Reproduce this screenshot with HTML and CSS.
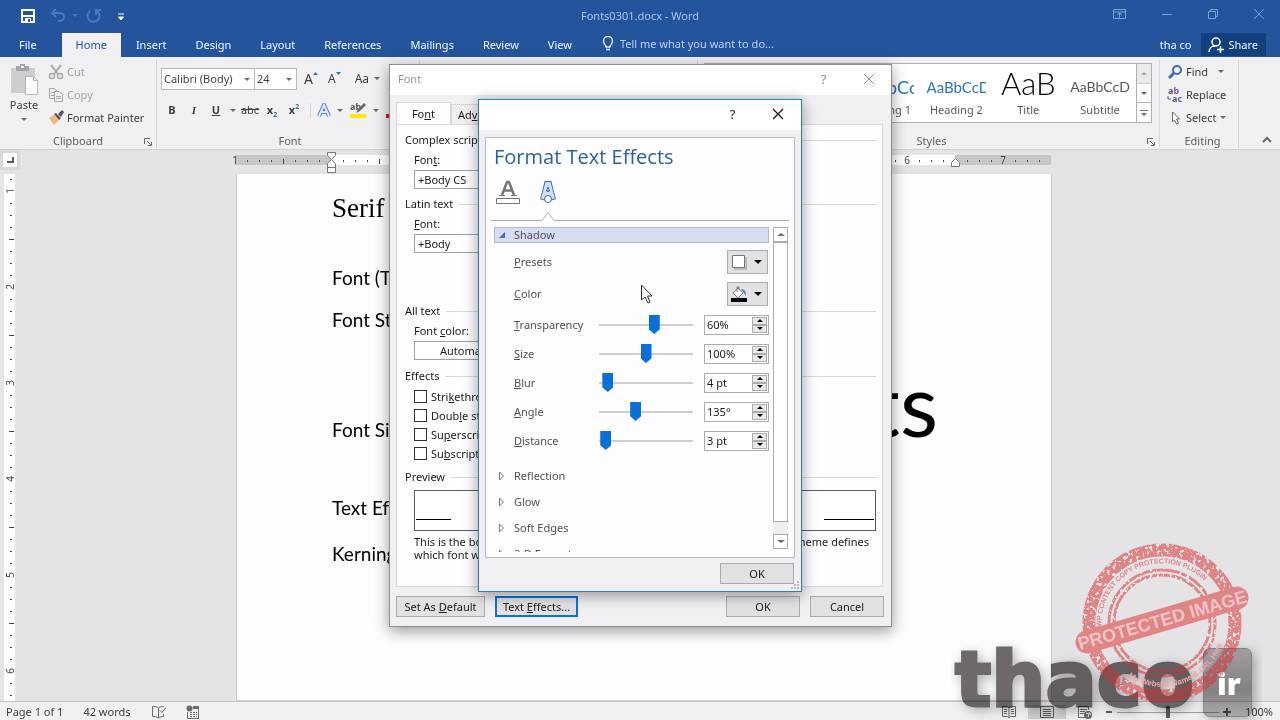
FILE: index.html
```html
<!DOCTYPE html>
<html lang="en">

<head>
	<meta charset="utf-8">
	<title>Fonts0301.docx - Word</title>
	<link rel="stylesheet" href="styles.css">
</head>

<body>
<div class="app">
	<header class="titlebar">
		<div class="quick">
			<button aria-label="Save"><svg width="16" height="16"><path d="M2 2h12v12H2z" fill="none" stroke="#fff" stroke-width="2"/><path d="M3 7h10v2H3zM5 10h6v4H5z" fill="#fff"/><path d="M8 11h2v3H8z" fill="#24559c"/></svg></button>
			<button class="faded" aria-label="Undo"><svg width="28" height="16"><path d="M6 1L2 5l4 4M2 5h8a4 4 0 0 1 0 8H8" fill="none" stroke="#4a78ba" stroke-width="2"/><path d="M22 6h6l-3 3z" fill="#4a78ba"/></svg></button>
			<button class="faded" aria-label="Redo"><svg width="16" height="16"><path d="M4 3a6 6 0 1 0 7 0M10 7V2h5" fill="none" stroke="#4a78ba" stroke-width="2"/></svg></button>
			<button aria-label="Customize"><svg width="16" height="16"><path d="M5 6h6M5.500 9h5l-2.500 3z" fill="#fff" stroke="#fff"/></svg></button>
		</div>
		<div class="doc-name">Fonts0301.docx - Word</div>
		<div class="win-buttons">
			<button aria-label="Ribbon options"><svg width="14" height="12"><path d="M.5 1.500h12v9H.5zM.5 4h12M6.500 10V5M4 7l2.500-2L9 7" fill="none" stroke="#7ba0d4"/></svg></button>
			<button aria-label="Minimize"><svg width="12" height="12"><path d="M1 6.500h10" stroke="#7ba0d4"/></svg></button>
			<button aria-label="Restore"><svg width="12" height="12"><path d="M1.500 3.500h7v7h-7zM3.500 3V1.500h7v7H9" fill="none" stroke="#7ba0d4"/></svg></button>
			<button aria-label="Close"><svg width="12" height="12"><path d="M1 1l10 10M11 1L1 11" stroke="#7ba0d4"/></svg></button>
		</div>
	</header>

	<nav class="tabs">
		<a class="tab file" href="#">File</a>
		<a class="tab active" href="#">Home</a>
		<a class="tab" href="#">Insert</a>
		<a class="tab" href="#">Design</a>
		<a class="tab" href="#">Layout</a>
		<a class="tab" href="#">References</a>
		<a class="tab" href="#">Mailings</a>
		<a class="tab" href="#">Review</a>
		<a class="tab" href="#">View</a>
		<a class="tell" href="#"><svg width="12" height="16"><path d="M4 11C4 9 1.500 8 1.500 5a4.500 4.500 0 0 1 9 0C10.500 8 8 9 8 11zM4 13.500h4" fill="none" stroke="#e6eefa" stroke-width="1.300"/></svg>Tell me what you want to do...</a>
		<span class="user">tha co</span>
		<button class="share"><svg width="16" height="16"><circle cx="8" cy="5" r="4" fill="none" stroke="#fff" stroke-width="1.500"/><path d="M1 15c0-4 3-6 6-6M9 12.500h7M12.500 9v7" fill="none" stroke="#fff" stroke-width="1.500"/></svg>Share</button>
	</nav>

	<div class="ribbon">
		<section class="group clipboard">
			<div class="group-body">
				<button class="paste">
					<svg width="30" height="32"><path d="M2 4h24v25H2z" fill="#cfcdd1"/><path d="M7 2h4V0h5v2h4v5H7z" fill="#a5a3a7"/><path d="M12 2h3v2h-3z" fill="#f0eff1"/><path d="M16.500 12.500h8l4 4v14h-12z" fill="#fdfcff" stroke="#b5b3b8"/><path d="M24.500 12.500v4h4" fill="none" stroke="#b5b3b8"/></svg>
					Paste
					<i class="arrow"></i>
				</button>
				<div class="stack">
					<button class="off"><svg width="16" height="16"><path d="M3 1l7 9M13 1L6 10" stroke="#a9a7ac" stroke-width="2"/><circle cx="4" cy="12" r="2.500" fill="none" stroke="#a9a7ac" stroke-width="1.500"/><circle cx="12" cy="12" r="2.500" fill="none" stroke="#a9a7ac" stroke-width="1.500"/></svg>Cut</button>
					<button class="off"><svg width="16" height="16"><path d="M1.500 1.500h5l3 3v7h-8z" fill="none" stroke="#a9a7ac"/><path d="M6.500 4.500h5l3 3v7h-8z" fill="#f0eff1" stroke="#a9a7ac"/><path d="M3 5.500h3M3 8.500h3M8 9.500h5M8 11.500h5" stroke="#a9a7ac"/></svg>Copy</button>
					<button><svg width="16" height="16"><path d="M1 8l5-3 5 5-5 5z" fill="#eeb979"/><path d="M6 4l2-1 5 5-2 2zM10 4l4-4 2 2-3 5z" fill="#57555a"/></svg>Format Painter</button>
				</div>
			</div>
			<div class="group-label">Clipboard<svg class="launcher" width="8" height="8"><path d="M.5 6V.5H6M3 3l4 4M7.500 4v3.500H4" fill="none" stroke="#6b696e"/></svg></div>
		</section>

		<section class="group font">
			<div class="font-row">
				<button class="combo name">Calibri (Body)<i class="arrow"></i></button><button class="combo size">24<i class="arrow"></i></button>
				<button class="grow"><span class="big">A</span><svg width="5" height="10"><path d="M0 4h5L2.500 1z" fill="#3a6db4"/></svg></button>
				<button class="grow"><span>A</span><svg width="5" height="10"><path d="M0 1h5L2.500 4z" fill="#3a6db4"/></svg></button>
				<button class="case">Aa<i class="arrow"></i></button>
			</div>
			<div class="font-row second">
				<button><b>B</b></button>
				<button><b class="ital">I</b></button>
				<button><b class="under">U</b></button>
				<button class="slim" aria-label="Underline style"><i class="arrow"></i></button>
				<button><s>abc</s></button>
				<button><b>x<sub>2</sub></b></button>
				<button><b>x<sup>2</sup></b></button>
				<button class="ink first"><svg width="14" height="15"><path d="M2 13L7 2l5 11M4 9h6" fill="none" stroke="#4f82c4" stroke-width="4"/><path d="M2 13L7 2l5 11M4 9h6" fill="none" stroke="#dfe9f7" stroke-width="2"/></svg><i class="arrow"></i></button>
				<button class="ink"><svg width="17" height="16"><text x="0" y="8" class="tiny">ab</text><path d="M6 11l2-4 6-6 2 2-6 6z" fill="#6b696e"/><path d="M0 12h16v4H0z" fill="#ffe800"/></svg><i class="arrow"></i></button>
				<button class="ink"><svg width="17" height="16"><path d="M4 10L8 1l4 9" fill="none" stroke="#555" stroke-width="2"/><path d="M0 12h16v4H0z" fill="#e81313"/></svg></button>
			</div>
			<div class="group-label">Font</div>
		</section>

		<section class="group paragraph">
			<div class="group-label">Paragraph</div>
		</section>

		<section class="group styles">
			<div class="gallery">
				<button class="style"><span>AaBbCcD</span>Normal</button>
				<button class="style"><span>AaBbCcD</span>No Spacing</button>
				<button class="style h1"><span>AaBbCc</span>Heading 1</button>
				<button class="style h2"><span>AaBbCcD</span>Heading 2</button>
				<button class="style title"><span>AaB</span>Title</button>
				<button class="style subtitle"><span>AaBbCcD</span>Subtitle</button>
				<div class="gallery-nav">
					<button class="dim" aria-label="Up"><i class="arrow up"></i></button>
					<button aria-label="Down"><i class="arrow"></i></button>
					<button aria-label="More"><svg width="8" height="8"><path d="M0 1.500h8" stroke="#6b696e"/><path d="M1 4h6L4 7z" fill="#6b696e"/></svg></button>
				</div>
			</div>
			<div class="group-label">Styles<svg class="launcher" width="8" height="8"><path d="M.5 6V.5H6M3 3l4 4M7.500 4v3.500H4" fill="none" stroke="#6b696e"/></svg></div>
		</section>

		<section class="group editing">
			<div class="group-body">
				<div class="stack">
					<button><svg width="16" height="14"><circle cx="10" cy="5" r="4" fill="none" stroke="#3a6db4" stroke-width="2"/><path d="M7 8l-5 5" stroke="#3a6db4" stroke-width="3"/></svg>Find<i class="arrow far"></i></button>
					<button><svg width="16" height="16"><text x="1" y="7" class="tiny">a<tspan fill="#8a4fb0">b</tspan></text><text x="5" y="15" class="tiny">a<tspan fill="#3a6db4">c</tspan></text><path d="M1 9v3h3" fill="none" stroke="#3a6db4"/></svg>Replace</button>
					<button><svg width="16" height="14"><path d="M5.500 1v10l2-2 2 4 2-1-2-4h3z" fill="#fff" stroke="#6b696e"/></svg>Select<i class="arrow"></i></button>
				</div>
			</div>
			<div class="group-label">Editing</div>
		</section>
		<button class="collapse" aria-label="Collapse ribbon"><svg width="10" height="8"><path d="M1 6l4-4 4 4" fill="none" stroke="#6b696e" stroke-width="2"/></svg></button>
	</div>

	<div class="ruler-row">
		<button class="corner" aria-label="Tab stop"><svg width="8" height="8"><path d="M7 1v5H1" fill="none" stroke="#5b595e" stroke-width="2"/></svg></button>
		<div class="ruler-wrap">
			<svg class="ruler" width="816" height="24">
				<defs>
					<pattern id="ticks" x="0" y="0" width="96" height="24" patternUnits="userSpaceOnUse">
						<path d="M12.500 10v2M24.500 10v2M36.500 10v2M60.500 10v2M72.500 10v2M84.500 10v2M48.500 9v5" stroke="#47454a"/>
					</pattern>
				</defs>
				<rect y="5" width="816" height="10" fill="#c6c5c7"/>
				<rect x="96" y="5" width="624" height="10" fill="#fff"/>
				<rect width="816" height="24" fill="url(#ticks)"/>
				<g class="ruler-num">
					<text x="0" y="14">1</text><text x="192" y="14">1</text><text x="672" y="14">6</text><text x="768" y="14">7</text>
				</g>
				<path d="M92.500 2.500h8v3l-4 4 4 4v9h-8v-9l4-4-4-4zM92.500 17.500h8M716.500 16.500v-4l4-4 4 4v4z" fill="#fff" stroke="#77757a"/>
			</svg>
		</div>
	</div>

	<main class="workspace">
		<svg class="v-ruler" width="16" height="527">
			<defs>
				<pattern id="vticks" x="0" y="17" width="16" height="96" patternUnits="userSpaceOnUse">
					<path d="M10 12.500h2M10 24.500h2M10 36.500h2M10 60.500h2M10 72.500h2M10 84.500h2M9 48.500h5" stroke="#47454a"/>
				</pattern>
			</defs>
			<rect x="4" width="11" height="527" fill="#fff"/>
			<rect width="16" height="527" fill="url(#vticks)"/>
			<g class="ruler-num">
				<text transform="translate(14 17) rotate(-90)">1</text><text transform="translate(14 113) rotate(-90)">2</text><text transform="translate(14 209) rotate(-90)">3</text><text transform="translate(14 305) rotate(-90)">4</text><text transform="translate(14 401) rotate(-90)">5</text><text transform="translate(14 497) rotate(-90)">6</text>
			</g>
		</svg>
		<article class="page">
			<p class="serif">Serif</p>
			<p class="face">Font (Typeface)</p>
			<p class="tight">Font Style</p>
			<p class="size-line">Font Size <span class="huge">Fonts</span></p>
			<p>Text Effects</p>
			<p>Kerning</p>
		</article>
	</main>

	<footer class="status">
		<span>Page 1 of 1</span>
		<span>42 words</span>
		<svg width="15" height="14"><path d="M7.500 3v10M7.500 3C6 1.500 3 1.500 1.500 1.500v10c2 0 4 0 6 1.500 1-1 3-1.500 5-1.500V9M7.500 3c1-1 3-1.500 5-1.500M9 5.500l2 2 4-5" fill="none" stroke="#6b696e"/></svg>
		<svg width="14" height="14"><circle cx="3.500" cy="3.500" r="3" fill="#6b696e"/><path d="M7 1h6v3H7z" fill="#6b696e"/><path d="M1.500 7v6.500h11V4M4 7.500h7M4 9.500h7M4 11.500h7" fill="none" stroke="#6b696e"/><path d="M6.500 6v7M9.500 6v7" stroke="#f0eff1"/></svg>
		<div class="views">
			<button aria-label="Read mode"><svg width="14" height="14"><path d="M7 2v11M.5 1.500h5L7 3l1.500-1.500h5v10h-5L7 13l-1.500-1.500h-5zM2 4.500h3M2 6.500h3M2 8.500h3M9 4.500h3M9 6.500h3M9 8.500h3" fill="none" stroke="#6b696e"/></svg></button>
			<button class="on" aria-label="Print layout"><svg width="14" height="14"><path d="M.5 1.500h13v11H.5zM3 4.500h8M3 6.500h8M3 8.500h8M3 10.500h8" fill="none" stroke="#5b595e"/></svg></button>
			<button aria-label="Web layout"><svg width="14" height="14"><path d="M7 12.500H.5v-11h10V5M2 4.500h7M2 6.500h5M2 8.500h4" fill="none" stroke="#6b696e"/><circle cx="10" cy="10" r="4" fill="#6b696e"/><path d="M8 8l3 1-1 3M11 7l2 3" fill="none" stroke="#f0eff1"/></svg></button>
		</div>
		<div class="zoom">
			<button aria-label="Zoom out"><svg width="8" height="8"><path d="M1 4h6" stroke="#5b595e" stroke-width="2"/></svg></button>
			<input type="range" min="0" max="100" value="50" aria-label="Zoom">
			<button aria-label="Zoom in"><svg width="8" height="8"><path d="M0 4h8M4 0v8" stroke="#5b595e" stroke-width="2"/></svg></button>
			<span>100%</span>
		</div>
	</footer>
</div>

<div class="dialog font-dialog" role="dialog" aria-label="Font">
	<div class="dialog-title"><span>Font</span><button>?</button><button aria-label="Close"><svg width="12" height="12"><path d="M1 1l10 10M11 1L1 11" stroke="#8b898e"/></svg></button></div>
	<div class="dialog-tabs">
		<button class="on">Fo<u>n</u>t</button>
		<button>Ad<u>v</u>anced</button>
	</div>
	<div class="font-panel">
		<h3>Complex scripts</h3>
		<label for="cs-font">Fon<u>t</u>:</label>
		<input id="cs-font" type="text" value="+Body CS">
		<h3 class="latin">Latin text</h3>
		<label for="latin-font"><u>F</u>ont:</label>
		<input id="latin-font" type="text" value="+Body">
		<h3 class="all">All text</h3>
		<label for="font-color">Font <u>c</u>olor:</label>
		<select id="font-color"><option>Automatic</option></select>
		<h3 class="effects">Effects</h3>
		<div class="checks">
			<label><input type="checkbox"><span>Stri<u>k</u>ethrough</span></label>
			<label><input type="checkbox"><span>Doub<u>l</u>e strikethrough</span></label>
			<label><input type="checkbox"><span>Su<u>p</u>erscript</span></label>
			<label><input type="checkbox"><span>Su<u>b</u>script</span></label>
		</div>
		<h3 class="preview-head">Preview</h3>
		<div class="preview"><i></i><i></i></div>
		<div class="note"><span>This is the body theme font for</span><span>The current document theme defines</span></div>
		<div class="note"><span>which font will be used.</span></div>
	</div>
	<div class="dialog-buttons">
		<button class="wide">Set As <u>D</u>efault</button>
		<button class="focus">Text <u>E</u>ffects...</button>
		<button class="push">OK</button>
		<button>Cancel</button>
	</div>
</div>

<div class="dialog effects-dialog" role="dialog" aria-label="Format Text Effects">
	<div class="dialog-title"><button>?</button><button aria-label="Close"><svg width="12" height="12"><path d="M1 1l10 10M11 1L1 11" stroke="#111" stroke-width="1.200"/></svg></button></div>
	<div class="fx-panel">
		<h2>Format Text Effects</h2>
		<div class="fx-icons">
			<button aria-label="Text fill and outline"><svg width="24" height="26"><path d="M6 16L11 3h2l5 13M8 11.500h8" fill="none" stroke="#77757a" stroke-width="2.500"/><path d="M3 16.500h6M15 16.500h6" stroke="#77757a"/><path d="M.5 19.500h23v5H.5z" fill="#fff" stroke="#77757a"/></svg></button>
			<button aria-label="Text effects"><svg width="18" height="26"><path d="M4 21L8 5h2l4 16M5 15h8" fill="none" stroke="#376cab" stroke-width="6"/><path d="M4 20L8 5h2l4 15M5 15h8" fill="none" stroke="#cfdef2" stroke-width="4"/><circle cx="9" cy="20" r="3.500" fill="#fff" stroke="#376cab"/><path d="M9 8l-1.500 4h3z" fill="#fff" stroke="#376cab"/></svg></button>
		</div>
		<svg class="notch" width="298" height="9"><path d="M0 8.500h51l6-8 6 8h235" fill="#fff" stroke="#aeacb1"/></svg>
		<div class="fx-scroll">
			<div class="fx-list">
				<button class="fold open"><svg width="8" height="8"><path d="M7 1v6H1z" fill="#3f6cb0"/></svg>Shadow</button>
				<div class="row tall"><span><u>P</u>resets</span><button class="drop" aria-label="Presets"><svg width="16" height="16"><path d="M3 3h13v13H3z" fill="#bdbbc0"/><path d="M1.500 1.500h12v12h-12z" fill="#fff" stroke="#77757a"/></svg><i class="arrow dark"></i></button></div>
				<div class="row tall"><span><u>C</u>olor</span><button class="drop" aria-label="Color"><svg width="16" height="16"><path d="M2 7l5-5 5 5-5 5z" fill="#fff" stroke="#77757a"/><path d="M6 6V1h2v3" fill="none" stroke="#77757a"/><path d="M10 3c4 0 5 3 5 7l-2-3z" fill="#5078b5"/><path d="M0 12h16v4H0z" fill="#000"/></svg><i class="arrow dark"></i></button></div>
				<div class="row"><label for="tr"><u>T</u>ransparency</label><input id="tr" type="range" value="60"><div class="spin"><input type="text" value="60%" aria-label="Transparency value"><button aria-label="More"><i class="arrow dark up"></i></button><button aria-label="Less"><i class="arrow dark"></i></button></div></div>
				<div class="row"><label for="sz"><u>S</u>ize</label><input id="sz" type="range" max="200" value="100"><div class="spin"><input type="text" value="100%" aria-label="Size value"><button aria-label="More"><i class="arrow dark up"></i></button><button aria-label="Less"><i class="arrow dark"></i></button></div></div>
				<div class="row"><label for="bl"><u>B</u>lur</label><input id="bl" type="range" value="4"><div class="spin"><input type="text" value="4 pt" aria-label="Blur value"><button aria-label="More"><i class="arrow dark up"></i></button><button aria-label="Less"><i class="arrow dark"></i></button></div></div>
				<div class="row"><label for="an"><u>A</u>ngle</label><input id="an" type="range" max="360" value="135"><div class="spin"><input type="text" value="135°" aria-label="Angle value"><button aria-label="More"><i class="arrow dark up"></i></button><button aria-label="Less"><i class="arrow dark"></i></button></div></div>
				<div class="row"><label for="di"><u>D</u>istance</label><input id="di" type="range" max="200" value="3"><div class="spin"><input type="text" value="3 pt" aria-label="Distance value"><button aria-label="More"><i class="arrow dark up"></i></button><button aria-label="Less"><i class="arrow dark"></i></button></div></div>
				<div class="folds">
					<button class="fold"><svg width="8" height="10"><path d="M1.500 1v8l4-4z" fill="#fff" stroke="#77757a"/></svg>Reflection</button>
					<button class="fold"><svg width="8" height="10"><path d="M1.500 1v8l4-4z" fill="#fff" stroke="#77757a"/></svg>Glow</button>
					<button class="fold"><svg width="8" height="10"><path d="M1.500 1v8l4-4z" fill="#fff" stroke="#77757a"/></svg>Soft Edges</button>
					<button class="fold"><svg width="8" height="10"><path d="M1.500 1v8l4-4z" fill="#fff" stroke="#77757a"/></svg>3-D Format</button>
				</div>
			</div>
			<div class="scrollbar">
				<button aria-label="Scroll up"><i class="arrow up"></i></button>
				<div class="thumb"></div>
				<button aria-label="Scroll down"><i class="arrow"></i></button>
			</div>
		</div>
	</div>
	<div class="dialog-buttons"><button class="push">OK</button></div>
	<svg class="grip" width="9" height="9"><path d="M6 0h2v2H6zM3 3h2v2H3zM6 3h2v2H6zM0 6h2v2H0zM3 6h2v2H3zM6 6h2v2H6z" fill="#bdbbc0"/></svg>
</div>

<svg class="cursor" width="14" height="20"><path d="M1.500 1v15l3.500-3 3 6 2-1-2.500-6H12z" fill="#fff" stroke="#2c2a30"/></svg>

<svg class="watermark blend" width="330" height="190" viewBox="950 530 330 190">
	<defs>
		<filter id="soft" x="-20%" y="-20%" width="140%" height="150%"><feDropShadow dx="3" dy="3" stdDeviation="6" flood-color="#000" flood-opacity=".3"/></filter>
		<linearGradient id="key" x1="0" y1="0" x2="0" y2="1"><stop offset="0" stop-color="#b4b2b5"/><stop offset=".6" stop-color="#939194"/><stop offset="1" stop-color="#b4b2b5"/></linearGradient>
	</defs>
	<text class="brand" x="955" y="706" filter="url(#soft)">thaco</text>
	<rect x="1203.500" y="648.500" width="48" height="68" rx="6" fill="url(#key)" stroke="#939194" filter="url(#soft)"/>
</svg>
<svg class="watermark" width="330" height="190" viewBox="950 530 330 190">
	<defs>
		<filter id="grain" x="-5%" y="-5%" width="110%" height="110%">
			<feTurbulence type="fractalNoise" baseFrequency="0.3" numOctaves="2" seed="4"/>
			<feColorMatrix values="0 0 0 0 0  0 0 0 0 0  0 0 0 0 0  0 0 0 -14 9"/>
			<feComposite in="SourceGraphic" operator="in"/>
		</filter>
		<path id="arc-top" d="M1101.500 627A60.500 60.500 0 1 1 1222 631"/>
		<path id="arc-low" d="M1128 677A64 64 0 0 0 1226 623"/>
	</defs>
	<text class="brand-tld" x="1217" y="695">ir</text>
	<g class="stamp">
		<circle cx="1162" cy="623" r="73" stroke-width="13" filter="url(#grain)"/>
		<circle cx="1162" cy="623" r="53" stroke-width="3" filter="url(#grain)"/>
		<circle cx="1162" cy="623" r="48" stroke-width="3" filter="url(#grain)"/>
		<path d="M1087 642L1237 598" stroke-width="23" stroke-linecap="round"/>
		<text class="stamp-top"><textPath href="#arc-top">WP CONTENT COPY PROTECTION PLUGIN</textPath></text>
	</g>
	<text class="stamp-low"><textPath href="#arc-low">My Website Name &amp; URL Here</textPath></text>
	<text class="stamp-mid" text-anchor="middle" transform="translate(1164 626) rotate(-16)">PROTECTED IMAGE</text>
</svg>
</body>

</html>
```
FILE: styles.css
```css
* {
	box-sizing: border-box;
}

body {
	margin: 0;
	overflow: hidden;
	font-family: "Noto Sans", "Open Sans", sans-serif;
	font-size: 11px;
	line-height: 16px;
	color: #3f3d42;
	background: #e4e3e5;
}

button, input, select {
	font: inherit;
	color: inherit;
	margin: 0;
	padding: 0;
	border: 0;
	background: none;
	border-radius: 0;
}

svg {
	display: block;
	flex: none;
}

h2, h3, p {
	margin: 0;
	font-weight: normal;
}

a {
	color: inherit;
	text-decoration: none;
}

.app {
	display: flex;
	flex-direction: column;
	height: 100vh;
}

.arrow {
	display: inline-block;
	border: 3px solid transparent;
	border-top-color: #6b696e;
	border-bottom: 0;
}

.arrow.up {
	border-top: 0;
	border-bottom: 3px solid #6b696e;
}

.arrow.dark {
	border-top-color: #000;
}

.arrow.dark.up {
	border-bottom-color: #000;
}

/* title bar */

.titlebar {
	display: grid;
	grid-template-columns: 1fr auto 1fr;
	align-items: center;
	height: 31px;
	padding: 0 15px;
	background: #24559c;
	color: #a9c3e8;
}

.quick {
	display: flex;
	align-items: center;
	gap: 14px;
	height: 26px;
	padding-left: 5px;
}

.quick .faded {
	margin-right: -6px;
}

.quick button:last-child {
	margin-left: 3px;
}

.win-buttons {
	display: flex;
	justify-content: flex-end;
	gap: 34px;
	padding-bottom: 4px;
}

/* ribbon tabs */

.tabs {
	display: flex;
	height: 26px;
	line-height: 28px;
	color: #f3f6fc;
	background: #24559c;
	padding-right: 4px;
}

.tab {
	padding: 0 15px 0 14px;
}

.tab.file {
	padding: 0 25px 0 19px;
}

.tab.active {
	background: #f0eff1;
	color: #24559c;
	padding: 0 14px;
	margin: 2px 1px 0 0;
	line-height: 24px;
}

.tell {
	display: flex;
	align-items: center;
	gap: 6px;
	margin-left: 15px;
	color: #bcd0ee;
}

.user {
	margin-left: auto;
	margin-right: 10px;
}

.share {
	display: flex;
	align-items: center;
	gap: 4px;
	padding: 0 8px 0 7px;
	margin: 2px 10px 1px 0;
	background: #12407f;
}

/* ribbon */

.ribbon {
	display: flex;
	height: 93px;
	padding: 3px 0 1px;
	background: #f0eff1;
	border-bottom: 1px solid #d2d0d3;
}

.group {
	display: flex;
	flex-direction: column;
	border-right: 1px solid #d5d4d6;
}

.group-body {
	display: flex;
	flex: 1;
}

.group-label {
	display: flex;
	justify-content: center;
	margin-top: auto;
	line-height: 14px;
	color: #626065;
}

.launcher {
	margin: 4px 4px 0 auto;
}

.group-label:has(.launcher)::before {
	content: "";
	width: 12px;
	margin-right: auto;
}

.clipboard {
	width: 157px;
}

.paste {
	display: flex;
	flex-direction: column;
	align-items: center;
	gap: 1px;
	padding: 4px 0 0;
	width: 48px;
}

.paste .arrow {
	margin-top: 4px;
}

.stack button {
	display: flex;
	align-items: center;
	gap: 3px;
	height: 23px;
}

.stack .off {
	color: #a3a1a6;
}

.font {
	width: 263px;
	padding-left: 4px;
}

.font-row {
	display: flex;
	align-items: center;
	height: 22px;
	margin-top: 8px;
}

.font-row.second {
	height: 20px;
	margin-top: 10px;
}

.second button {
	display: flex;
	align-items: center;
	justify-content: center;
	gap: 6px;
	width: 22px;
}

.second .slim {
	width: 12px;
}

.second .ink {
	width: auto;
	margin-left: 7px;
}

.second .first {
	margin-left: 5px;
	padding-left: 6px;
	border-left: 1px solid #d5d4d6;
}

.ital {
	font-family: "Liberation Serif", serif;
	font-style: italic;
}

.under {
	text-decoration: underline;
}

sub, sup {
	font-size: 7px;
	line-height: 0;
	color: #3a6db4;
}

.tiny {
	font-size: 9px;
	font-weight: bold;
	fill: #57555a;
}

.combo {
	display: flex;
	align-items: center;
	justify-content: space-between;
	height: 22px;
	padding: 0 4px 0 2px;
	border: 1px solid #b9b7bb;
	background: #fff;
}

.combo.name {
	width: 94px;
}

.combo.size {
	width: 43px;
	margin-left: -1px;
	margin-right: 7px;
}

.grow {
	display: flex;
	font-size: 12px;
	margin-right: 10px;
}

.grow .big {
	font-size: 14px;
}

.case {
	margin-left: 4px;
	font-size: 12px;
}

.case .arrow {
	margin: 0 0 3px 5px;
}

.paragraph {
	flex: 1;
	overflow: hidden;
}

.styles {
	width: 462px;
	padding-left: 6px;
}

.gallery {
	display: flex;
	height: 60px;
	margin: 3px 7px 0 0;
	border: 1px solid #b1afb3;
	background: #fff;
}

.style {
	flex: 1 1 0;
	min-width: 0;
	padding: 0 6px;
	overflow: hidden;
	white-space: nowrap;
	color: #57555a;
}

.style span {
	display: block;
	height: 32px;
	line-height: 38px;
	margin-bottom: 2px;
	overflow: hidden;
	font-family: Lato, sans-serif;
	font-size: 14px;
}

.style.h1 span {
	font-size: 18px;
	color: #2e74b5;
}

.style.h2 span {
	font-size: 15px;
	color: #2e74b5;
}

.style.title span {
	font-size: 31px;
	font-weight: 300;
	line-height: 30px;
	color: #000;
}

.gallery-nav {
	display: flex;
	flex-direction: column;
	width: 15px;
	border-left: 1px solid #b1afb3;
}

.gallery-nav button {
	flex: 1;
	display: flex;
	align-items: center;
	justify-content: center;
	border-bottom: 1px solid #b1afb3;
}

.gallery-nav button:last-child {
	border-bottom: 0;
}

.gallery-nav .dim {
	background: #e1e0e2;
	opacity: .6;
}

.editing {
	width: 79px;
	padding-left: 7px;
}

.far {
	margin-left: 7px;
}

.collapse {
	margin: auto 8px 4px 23px;
}

/* rulers and page */

.ruler-row {
	display: flex;
	height: 24px;
}

.corner {
	display: flex;
	align-items: center;
	justify-content: center;
	width: 20px;
	height: 20px;
	border: 3px solid #d8d7d9;
	background: #fff;
}

.ruler-wrap {
	flex: 1;
	display: flex;
	justify-content: center;
	padding-right: 14px;
}

.ruler {
	overflow: visible;
}

.ruler-num {
	font-size: 10px;
	fill: #47454a;
	text-anchor: middle;
}

.workspace {
	flex: 1;
	min-height: 0;
	display: flex;
	padding-right: 8px;
	overflow: hidden;
}

.page {
	width: 816px;
	margin: 0 auto;
	padding: 16px 113px 0 95px;
	background: #fdfcff;
	border: 1px solid #cccbcd;
	border-top: 0;
	font-family: Lato, sans-serif;
	font-size: 19px;
	line-height: 42px;
	color: #000;
}

.page p + p {
	margin-top: 4px;
}

.page .serif {
	font-family: "Liberation Serif", serif;
	font-size: 27px;
	line-height: 36px;
}

.page p.face {
	margin-top: 31px;
}

.page p.tight {
	margin-top: 0;
}

.page p.size-line {
	display: flex;
	justify-content: space-between;
	align-items: baseline;
	margin-top: 9px;
	line-height: 106px;
}

.huge {
	font-size: 88px;
}

/* status bar */

.status {
	display: flex;
	align-items: center;
	gap: 20px;
	height: 19px;
	padding: 2px 7px 0 6px;
	border-top: 1px solid #c4c3c5;
	background: #f0eff1;
}

.views {
	display: flex;
	margin: 0 -19px 0 auto;
}

.views button {
	display: flex;
	justify-content: center;
	width: 38px;
}

.views .on {
	background: #cfced0;
}

.zoom {
	display: flex;
	align-items: center;
	gap: 4px;
}

.zoom input {
	appearance: none;
	width: 102px;
	height: 12px;
	background: linear-gradient(#a19fa4, #a19fa4) center / 100% 1px no-repeat;
}

.zoom input::-webkit-slider-thumb {
	appearance: none;
	width: 4px;
	height: 12px;
	background: #5b595e;
}

.zoom span {
	margin-left: 10px;
}

/* dialogs */

.dialog {
	position: absolute;
	display: flex;
	flex-direction: column;
	background: #f0eff1;
	color: #1a191c;
}

.dialog-title {
	display: flex;
	align-items: center;
	height: 30px;
	padding-bottom: 2px;
	background: #fff;
}

.dialog-title button {
	width: 45px;
	font-size: 13px;
	display: flex;
	justify-content: center;
}

.dialog-title span {
	color: #98969b;
}

.dialog-title button:nth-last-child(2) {
	margin-left: auto;
}

.dialog-buttons {
	display: flex;
	gap: 11px;
}

.dialog-buttons button {
	width: 74px;
	height: 21px;
	border: 1px solid #adabb0;
	background: #e1e0e2;
}

.dialog-buttons .wide {
	width: 89px;
}

.dialog-buttons .focus {
	width: 83px;
	border: 2px solid #0a74d8;
}

.dialog-buttons .push {
	margin-left: auto;
}

.font-dialog {
	left: 389px;
	top: 64px;
	width: 503px;
	border: 1px solid #8f8d91;
	box-shadow: 0 4px 14px rgba(0, 0, 0, .4);
}

.font-dialog .dialog-title {
	padding-left: 8px;
	color: #8b898e;
}

.dialog-tabs {
	display: flex;
	align-items: flex-end;
	padding: 7px 7px 0 6px;
}

.dialog-tabs button {
	height: 20px;
	padding: 0 6px;
	border: 1px solid #d8d7d9;
	border-bottom: 0;
	background: #f0eff1;
}

.dialog-tabs .on {
	height: 23px;
	width: 55px;
	margin-bottom: -1px;
	background: #fdfcff;
}

.font-panel {
	margin: 0 8px 0 6px;
	padding: 7px 6px 25px 8px;
	border: 1px solid #d8d7d9;
	background: #fdfcff;
}

.font-panel h3 {
	display: flex;
	align-items: center;
	gap: 6px;
	font-size: 11px;
}

.font-panel h3::after {
	content: "";
	flex: 1;
	height: 1px;
	background: #d8d7d9;
}

.font-panel > label {
	display: block;
	margin: 4px 0 2px 9px;
	line-height: 16px;
}

.font-panel > input,
.font-panel > select {
	display: block;
	width: 140px;
	height: 19px;
	margin-left: 9px;
	padding: 0 3px;
	border: 1px solid #a19fa4;
	background: #fff;
}

.font-panel > select {
	appearance: none;
	padding-left: 25px;
}

.font-panel .latin {
	margin-top: 7px;
}

.font-panel .all {
	margin-top: 50px;
}

.font-panel .effects {
	margin-top: 8px;
}

.checks {
	margin: 3px 0 6px 9px;
}

.checks label {
	display: flex;
	align-items: center;
	gap: 4px;
	height: 19px;
}

.checks input {
	appearance: none;
	width: 13px;
	height: 13px;
	border: 1px solid #333135;
	background: #fff;
}

.preview {
	display: flex;
	justify-content: space-between;
	align-items: flex-end;
	height: 41px;
	margin: 5px 0 4px 9px;
	padding: 0 1px 10px;
	border: 1px solid #5b595e;
	background: #fff;
}

.preview i {
	width: 35px;
	height: 1px;
	background: #000;
}

.preview i + i {
	width: 50px;
}

.note {
	display: flex;
	justify-content: space-between;
	padding: 0 7px 0 9px;
	line-height: 13px;
}

.font-dialog .dialog-buttons {
	padding: 9px 7px 9px 6px;
	gap: 10px;
}

.effects-dialog {
	left: 478px;
	top: 99px;
	width: 324px;
	border: 1px solid #2a7fb8;
	box-shadow: 0 3px 14px rgba(0, 0, 0, .4);
}

.effects-dialog .dialog-title {
	padding-right: 1px;
}

.fx-panel {
	margin: 7px 6px 5px;
	border: 1px solid #bdbbc0;
	background: #fdfcff;
	padding: 5px;
}

.fx-panel h2 {
	padding-left: 3px;
	font-family: "Open Sans", sans-serif;
	font-size: 20px;
	line-height: 28px;
	color: #2f5f9c;
}

.fx-icons {
	display: flex;
	gap: 19px;
	padding: 8px 5px 7px;
}

.notch {
	width: 100%;
}

.fx-scroll {
	display: flex;
	height: 325px;
	margin-top: 6px;
	gap: 4px;
	overflow: hidden;
	color: #525055;
}

.fx-list {
	flex: 1;
	padding-left: 3px;
}

.fold {
	display: flex;
	align-items: center;
	gap: 8px;
	height: 26px;
	padding-left: 4px;
	width: 100%;
}

.fold.open {
	height: 16px;
	margin-bottom: 3px;
	padding-left: 3px;
	border: 1px solid #a9b8dc;
	background: #d4ddf2;
}

.row {
	display: flex;
	align-items: center;
	height: 29px;
	padding-left: 20px;
}

.row.tall {
	height: 32px;
}

.row > span, .row > label {
	width: 85px;
}

.row .drop {
	display: flex;
	align-items: center;
	justify-content: space-between;
	width: 41px;
	height: 24px;
	margin: 0 1px 0 auto;
	padding: 0 5px 0 3px;
	border: 1px solid #adabb0;
	background: #e1e0e2;
}

.drop .arrow {
	border-width: 4px 4px 0;
}

.row > input {
	appearance: none;
	width: 94px;
	height: 20px;
	background: linear-gradient(#cfcdd1, #cfcdd1) center / 100% 2px no-repeat;
}

.row > input::-webkit-slider-thumb {
	appearance: none;
	width: 11px;
	height: 19px;
	background: #0a70d8;
	clip-path: polygon(0 0, 100% 0, 100% 75%, 50% 100%, 0 75%);
}

.spin {
	display: grid;
	grid-template-columns: 1fr 15px;
	grid-template-rows: 1fr 1fr;
	width: 65px;
	height: 20px;
	margin-left: auto;
	padding: 1px;
	border: 1px solid #adabb0;
	background: #fff;
	color: #1a191c;
}

.spin input {
	grid-row: span 2;
	min-width: 0;
	padding-left: 1px;
	background: none;
}

.spin button {
	display: flex;
	align-items: center;
	justify-content: center;
	border: 1px solid #adabb0;
	background: #e9e8ea;
}

.folds {
	padding-top: 8px;
}

.scrollbar {
	display: flex;
	flex-direction: column;
	width: 15px;
	height: 322px;
	margin-right: 1px;
	background: #f0eff1;
}

.scrollbar button {
	display: flex;
	align-items: center;
	justify-content: center;
	height: 15px;
	border: 1px solid #adabb0;
	background: #fff;
}

.scrollbar .arrow {
	border-left-width: 4px;
	border-right-width: 4px;
}

.thumb {
	flex: 1;
	margin-bottom: 12px;
	border: 1px solid #adabb0;
	background: #fff;
}

.effects-dialog .dialog-buttons {
	padding: 0 7px 7px;
}

.grip {
	position: absolute;
	right: 1px;
	bottom: 1px;
}

.cursor {
	position: absolute;
	left: 640px;
	top: 284px;
}

/* site watermark */

.watermark {
	position: absolute;
	right: 0;
	bottom: 0;
}

.blend {
	mix-blend-mode: multiply;
}

.brand {
	font-family: "DejaVu Sans", sans-serif;
	font-size: 76px;
	font-weight: bold;
	fill: #6e6b6b;
	stroke: #6e6b6b;
	stroke-width: 3px;
}

.brand-tld {
	font-family: "Open Sans", sans-serif;
	font-size: 30px;
	font-weight: 800;
	fill: #fff;
}

.stamp {
	opacity: .5;
}

.stamp circle, .stamp path {
	fill: none;
	stroke: #dd2a2a;
}

.stamp-top, .stamp-low, .stamp-mid {
	font-family: "Liberation Sans", sans-serif;
	font-weight: bold;
}

.stamp-top {
	font-size: 7px;
	fill: #dd2a2a;
}

.stamp-low {
	font-size: 8px;
	fill: #f5a3a3;
}

.stamp-mid {
	font-size: 18px;
	fill: #f0c3c6;
}
```
